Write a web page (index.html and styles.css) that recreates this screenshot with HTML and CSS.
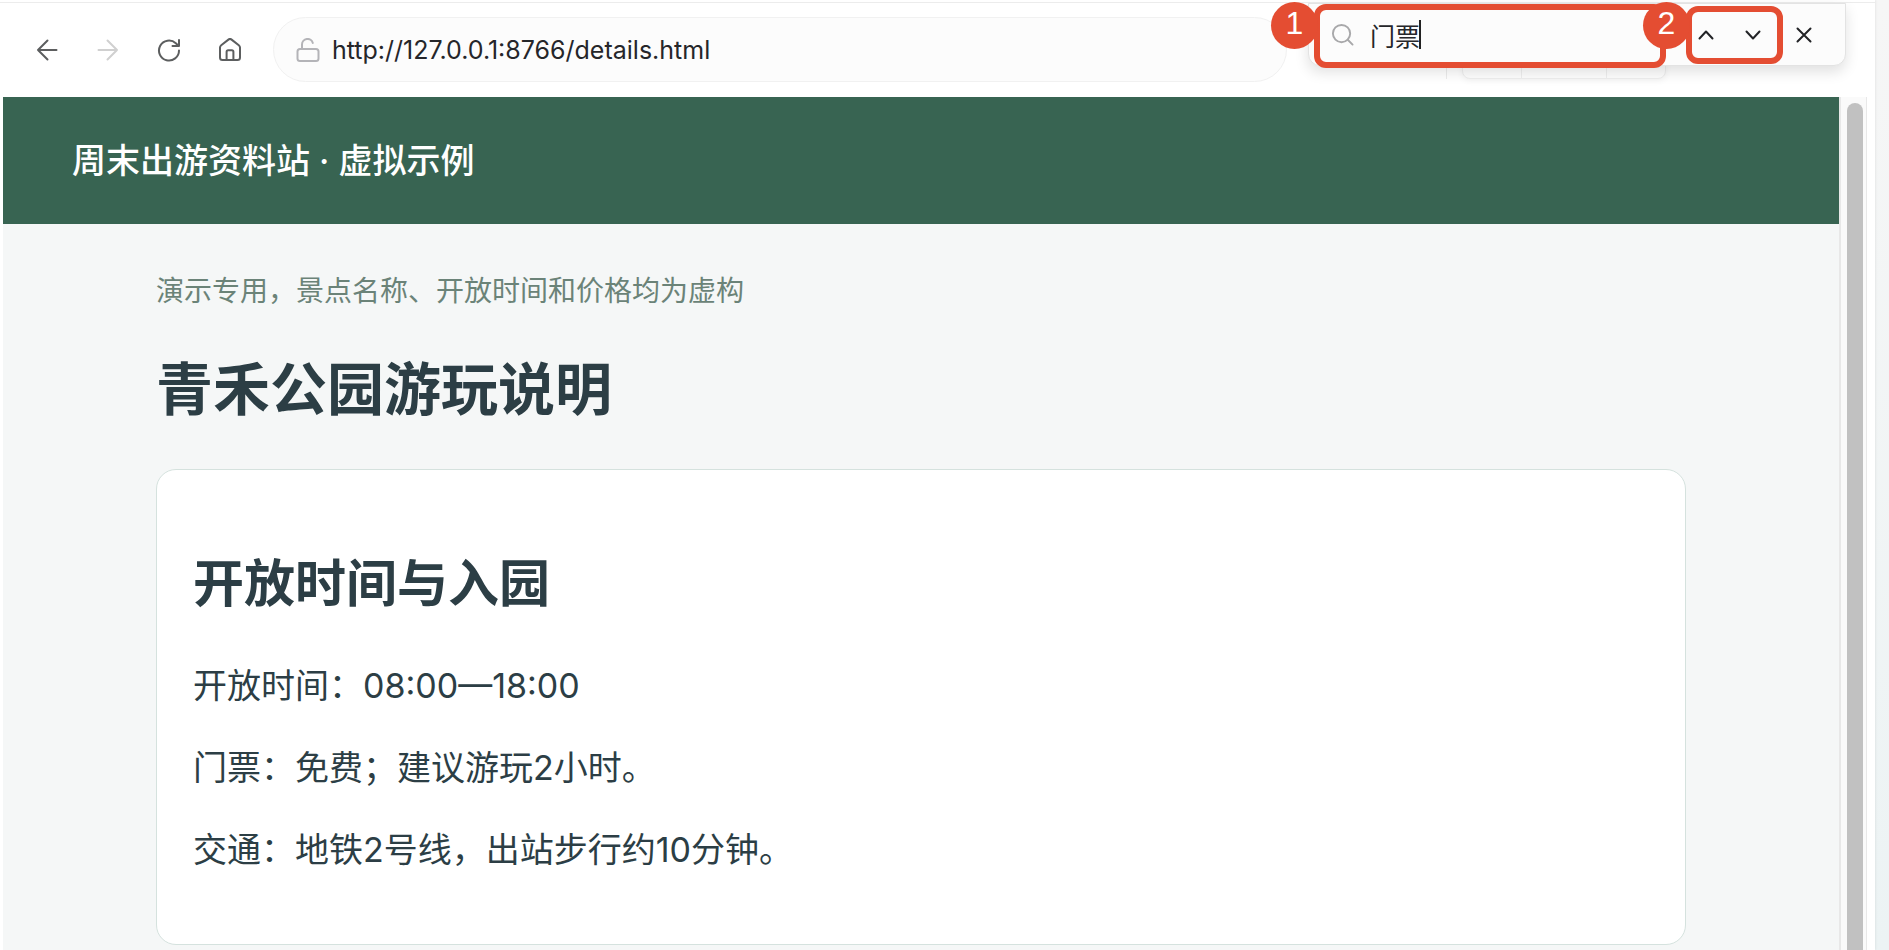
FILE: index.html
```html
<!DOCTYPE html>
<html lang="zh-CN">
<head>
    <meta charset="UTF-8">
    <title>青禾公园游玩说明</title>
    <link rel="stylesheet" href="styles.css">
</head>
<body>

<div class="window">
    <!-- 浏览器工具栏 -->
    <div class="toolbar">
        <button class="nav-btn" type="button" aria-label="后退">
            <svg viewBox="0 0 24 24"><path d="M21.5 12H3M12.5 2.5L3 12l9.5 9.5"/></svg>
        </button>
        <button class="nav-btn" type="button" aria-label="前进" disabled>
            <svg viewBox="0 0 24 24"><path d="M2.5 12H21M11.5 2.5L21 12l-9.5 9.5"/></svg>
        </button>
        <button class="nav-btn" type="button" aria-label="刷新">
            <svg viewBox="0 0 24 24"><path d="M22 12.5A10 10 0 1 1 18.8 5.2L21.5 7.8M22 2v6h-6.5"/></svg>
        </button>
        <button class="nav-btn" type="button" aria-label="主页">
            <svg viewBox="0 0 24 24"><path d="M2 9.6c0-1 .4-1.8 1.2-2.4L10.4 1.600c1-.8 2.200-.8 3.200 0l7.200 5.600c.8.6 1.200 1.400 1.200 2.400V19.500c0 1.500-1 2.500-2.500 2.500h-15C3 22 2 21 2 19.500zM8.600 22v-8.200c0-.9.6-1.500 1.500-1.500h3.800c.9 0 1.500.6 1.500 1.500V22"/></svg>
        </button>
        <div class="address">
            <svg viewBox="0 0 24 24"><rect x="1.500" y="11" width="21" height="12" rx="2.500"/><path d="M6 11V6.500a5.500 5.500 0 0 1 10.800-1.500"/></svg>
            <input type="text" aria-label="地址" value="http://127.0.0.1:8766/details.html">
        </div>
    </div>

    <!-- 网页内容 -->
    <div class="viewport">
        <div class="page">
            <header class="site-header">周末出游资料站 · 虚拟示例</header>
            <main>
                <p class="notice">演示专用，景点名称、开放时间和价格均为虚构</p>
                <h1>青禾公园游玩说明</h1>
                <section class="card">
                    <h2>开放时间与入园</h2>
                    <p>开放时间：08:00—18:00</p>
                    <p>门票：免费；建议游玩2小时。</p>
                    <p>交通：地铁2号线，出站步行约10分钟。</p>
                </section>
            </main>
        </div>
        <div class="scroll-track"><div class="scroll-thumb"></div></div>
    </div>

    <!-- 被查找栏盖住的扩展按钮 -->
    <div class="extensions"><span></span><span></span><span></span></div>

    <!-- 页内查找 -->
    <div class="find-bar">
        <div class="find-field">
            <svg viewBox="0 0 24 24"><circle cx="11" cy="11" r="9"/><path d="M17.500 17.500L22.500 22.500"/></svg>
            <div class="find-text">
                <input type="text" aria-label="查找" value="门票">
                <i class="caret"></i>
            </div>
            <span class="badge">1</span>
        </div>
        <div class="find-steps">
            <button type="button" aria-label="上一个"><svg viewBox="0 0 16 16"><path d="M1.500 11.500l6.500-7 6.500 7"/></svg></button>
            <button type="button" aria-label="下一个"><svg viewBox="0 0 16 16"><path d="M1.500 4.500l6.500 7 6.500-7"/></svg></button>
            <span class="badge">2</span>
        </div>
        <button class="find-close" type="button" aria-label="关闭"><svg viewBox="0 0 16 16"><path d="M1.500 1.500l13 13M14.500 1.500l-13 13"/></svg></button>
    </div>
</div>

</body>
</html>
```
FILE: styles.css
```css
* {
    box-sizing: border-box;
}
body {
    margin: 0;
    height: 100vh;
    overflow: hidden;
    background: linear-gradient(#f6f6f6, #ecf3f4);
    color: #2c3e45;
    font-family: Inter, "Noto Sans CJK SC", sans-serif;
}
button {
    display: flex;
    align-items: center;
    justify-content: center;
    padding: 0;
    border: 0;
    background: none;
}
input {
    padding: 0;
    border: 0;
    outline: 0;
    background: none;
    font-family: inherit;
}
svg {
    fill: none;
    stroke: currentColor;
    stroke-width: 2;
    stroke-linecap: round;
    stroke-linejoin: round;
}
.window {
    position: relative;
    display: flex;
    flex-direction: column;
    height: 100%;
    margin-right: 14px;
    background: #fff;
    box-shadow: 1px 0 2px rgba(0, 0, 0, .06);
}

/* 工具栏 */
.toolbar {
    display: flex;
    align-items: center;
    flex: none;
    height: 95px;
    margin-top: 2px;
    padding: 0 588px 1px 16px;
    border-top: 1px solid #ececec;
}
.nav-btn {
    width: 61px;
    height: 48px;
    color: #5c5e5f;
}
.nav-btn:disabled {
    color: #d0d0d0;
}
.nav-btn svg {
    width: 24px;
    height: 24px;
}
.address {
    display: flex;
    align-items: center;
    gap: 12px;
    flex: 1;
    height: 65px;
    margin-left: 13px;
    padding-left: 22px;
    border: 1px solid #f1f1f1;
    border-radius: 33px;
    background: #fcfcfc;
}
.address svg {
    flex: none;
    width: 24px;
    height: 24px;
    color: #b4b4b8;
}
.address input {
    flex: 1;
    color: #25262a;
    font-size: 25px;
}

/* 网页 */
.viewport {
    display: flex;
    flex: 1;
    min-height: 0;
    padding-left: 3px;
}
.page {
    flex: 1;
    overflow: hidden;
    background: #f5f7f7;
}
.site-header {
    padding: 38px 69px;
    background: #386452;
    color: #fff;
    font-size: 34px;
    font-weight: 500;
    line-height: 51px;
}
main {
    padding: 45px 153px;
}
.notice {
    margin: 0;
    color: #6b8378;
    font-size: 28px;
    line-height: 44px;
}
h1 {
    margin: 34px 0 37px;
    font-size: 57px;
    line-height: 85px;
}
.card {
    padding: 72px 36px 69px;
    border: 1px solid #d5e2de;
    border-radius: 20px;
    background: #fff;
}
.card h2 {
    margin: 0 0 34px;
    font-size: 51px;
    line-height: 84px;
}
.card p {
    margin: 0 0 31px;
    font-size: 34px;
    line-height: 51px;
}
.card p:last-child {
    margin-bottom: 0;
}
.scroll-track {
    flex: none;
    width: 28px;
    margin-right: 8px;
    padding: 6px 4px 0 6px;
    border: solid #e8e8e8;
    border-width: 0 1px 0 2px;
    background: #fafafa;
}
.scroll-thumb {
    width: 16px;
    height: 100%;
    border-radius: 8px 8px 0 0;
    background: #c1c1c1;
}

/* 查找栏 */
.extensions {
    position: absolute;
    top: 40px;
    right: 209px;
    display: grid;
    grid-template-columns: 58px 85px 1fr;
    width: 204px;
    height: 39px;
    border: 1px solid #eee;
    border-radius: 8px;
    background: #fdfdfd;
    box-shadow: 0 2px 6px rgba(0, 0, 0, .05);
}
.extensions::before {
    content: "";
    position: absolute;
    left: -17px;
    width: 1px;
    height: 38px;
    background: #ececec;
}
.extensions span + span {
    border-left: 1px solid #eee;
}
.find-bar {
    position: absolute;
    top: 3px;
    right: 29px;
    display: flex;
    align-items: flex-start;
    width: 538px;
    height: 63px;
    padding-left: 5px;
    border: 1px solid #e3e3e3;
    border-radius: 0 0 12px 12px;
    background: #fcfcfc;
    box-shadow: 0 6px 14px rgba(0, 0, 0, .12);
}
.find-field,
.find-steps {
    position: relative;
    display: flex;
    border: 6px solid #e44d32;
    border-radius: 12px;
}
.find-field {
    align-items: center;
    width: 352px;
    height: 64px;
    padding: 0 0 3px 11px;
}
.find-field svg {
    width: 23px;
    height: 23px;
    color: #a8a8aa;
}
.find-text {
    display: flex;
    align-items: center;
    margin-left: 16px;
}
.find-text input {
    width: 49px;
    color: #25262a;
    font-size: 25px;
}
.caret {
    width: 2px;
    height: 29px;
    background: #222;
}
.find-steps {
    align-items: center;
    gap: 19px;
    width: 97px;
    height: 58px;
    margin: 2px 0 0 20px;
}
.find-steps button {
    width: 28px;
    height: 40px;
}
.find-bar button {
    color: #222326;
}
.find-bar button svg {
    width: 16px;
    height: 16px;
}
.find-close {
    width: 42px;
    height: 61px;
}
.badge {
    position: absolute;
    top: -8px;
    left: -49px;
    width: 47px;
    height: 47px;
    border-radius: 50%;
    background: #e44d32;
    color: #fff;
    font: 32px/42px "Liberation Sans", sans-serif;
    text-align: center;
}
.find-steps .badge {
    top: -10px;
}
```
